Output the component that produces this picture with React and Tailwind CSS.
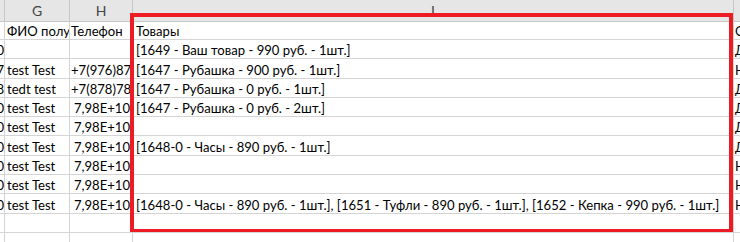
import React from "react";

const rows = [
  { h: "h-[19px]", f: "", g: "ФИО получателя", hc: "Телефон", i: "Товары", j: "С" },
  { h: "h-[19px]", f: "0", g: "", hc: "", i: "[1649 - Ваш товар - 990 руб. - 1шт.]", j: "Д" },
  { h: "h-[20px]", f: "7", g: "test Test", hc: "+7(976)876", i: "[1647 - Рубашка - 900 руб. - 1шт.]", j: "Н" },
  { h: "h-[19px]", f: "8", g: "tedt test", hc: "+7(878)787", i: "[1647 - Рубашка - 0 руб. - 1шт.]", j: "Д" },
  { h: "h-[19px]", f: "0", g: "test Test", hc: "7,98E+10", num: true, i: "[1647 - Рубашка - 0 руб. - 2шт.]", j: "Д" },
  { h: "h-[19px]", f: "0", g: "test Test", hc: "7,98E+10", num: true, i: "", j: "Д" },
  { h: "h-[20px]", f: "0", g: "test Test", hc: "7,98E+10", num: true, i: "[1648-0 - Часы - 890 руб. - 1шт.]", j: "Д" },
  { h: "h-[19px]", f: "0", g: "test Test", hc: "7,98E+10", num: true, i: "", j: "Н" },
  { h: "h-[19px]", f: "0", g: "test Test", hc: "7,98E+10", num: true, i: "", j: "Н" },
  { h: "h-[20px]", f: "0", g: "test Test", hc: "7,98E+10", num: true, i: "[1648-0 - Часы - 890 руб. - 1шт.], [1651 - Туфли - 890 руб. - 1шт.], [1652 - Кепка - 990 руб. - 1шт.]", j: "Н" },
  { h: "h-[19px]", f: "", g: "", hc: "", i: "", j: "" },
  { h: "h-[19px]", f: "", g: "", hc: "", i: "", j: "" },
];

const cell = "border-r border-b border-[#d4d4d4] overflow-hidden whitespace-nowrap flex items-end leading-[16px]";

export default function App() {
  return (
    <div
      className="relative w-[740px] h-[242px] overflow-hidden bg-white text-black text-[13.1px]"
      style={{ fontFamily: "Lato, 'Liberation Sans', sans-serif" }}
    >
      <div className="grid grid-cols-[5px_65px_63px_601px_1fr] h-[21px] bg-[#e6e6e6] text-[#444] text-[14px]">
        <div className="border-r border-b border-[#c6c6c6]" />
        <div className="border-r border-b border-[#c6c6c6] flex items-center justify-center">G</div>
        <div className="border-r border-b border-[#c6c6c6] flex items-center justify-center">H</div>
        <div className="border-r border-b border-[#c6c6c6] flex items-center justify-center">I</div>
        <div className="border-b border-[#c6c6c6]" />
      </div>
      {rows.map((r, idx) => (
        <div key={idx} className={`grid grid-cols-[5px_65px_63px_601px_1fr] ${r.h}`}>
          <div className={`${cell} justify-end`}>{r.f}</div>
          <div className={`${cell} pl-[2px]`}>{r.g}</div>
          <div className={`${cell} ${r.num ? "justify-end pr-[2px]" : "pl-[1px]"}`}>{r.hc}</div>
          <div className={`${cell} pl-[3px]`}>{r.i}</div>
          <div className="border-b border-[#d4d4d4] overflow-hidden whitespace-nowrap flex items-end leading-[16px] pl-[1px]">{r.j}</div>
        </div>
      ))}
      <div className="absolute left-[130px] top-[13px] w-[603px] h-[219px] border-[4px] border-b-[3px] border-[#ed1c24] pointer-events-none" />
    </div>
  );
}
